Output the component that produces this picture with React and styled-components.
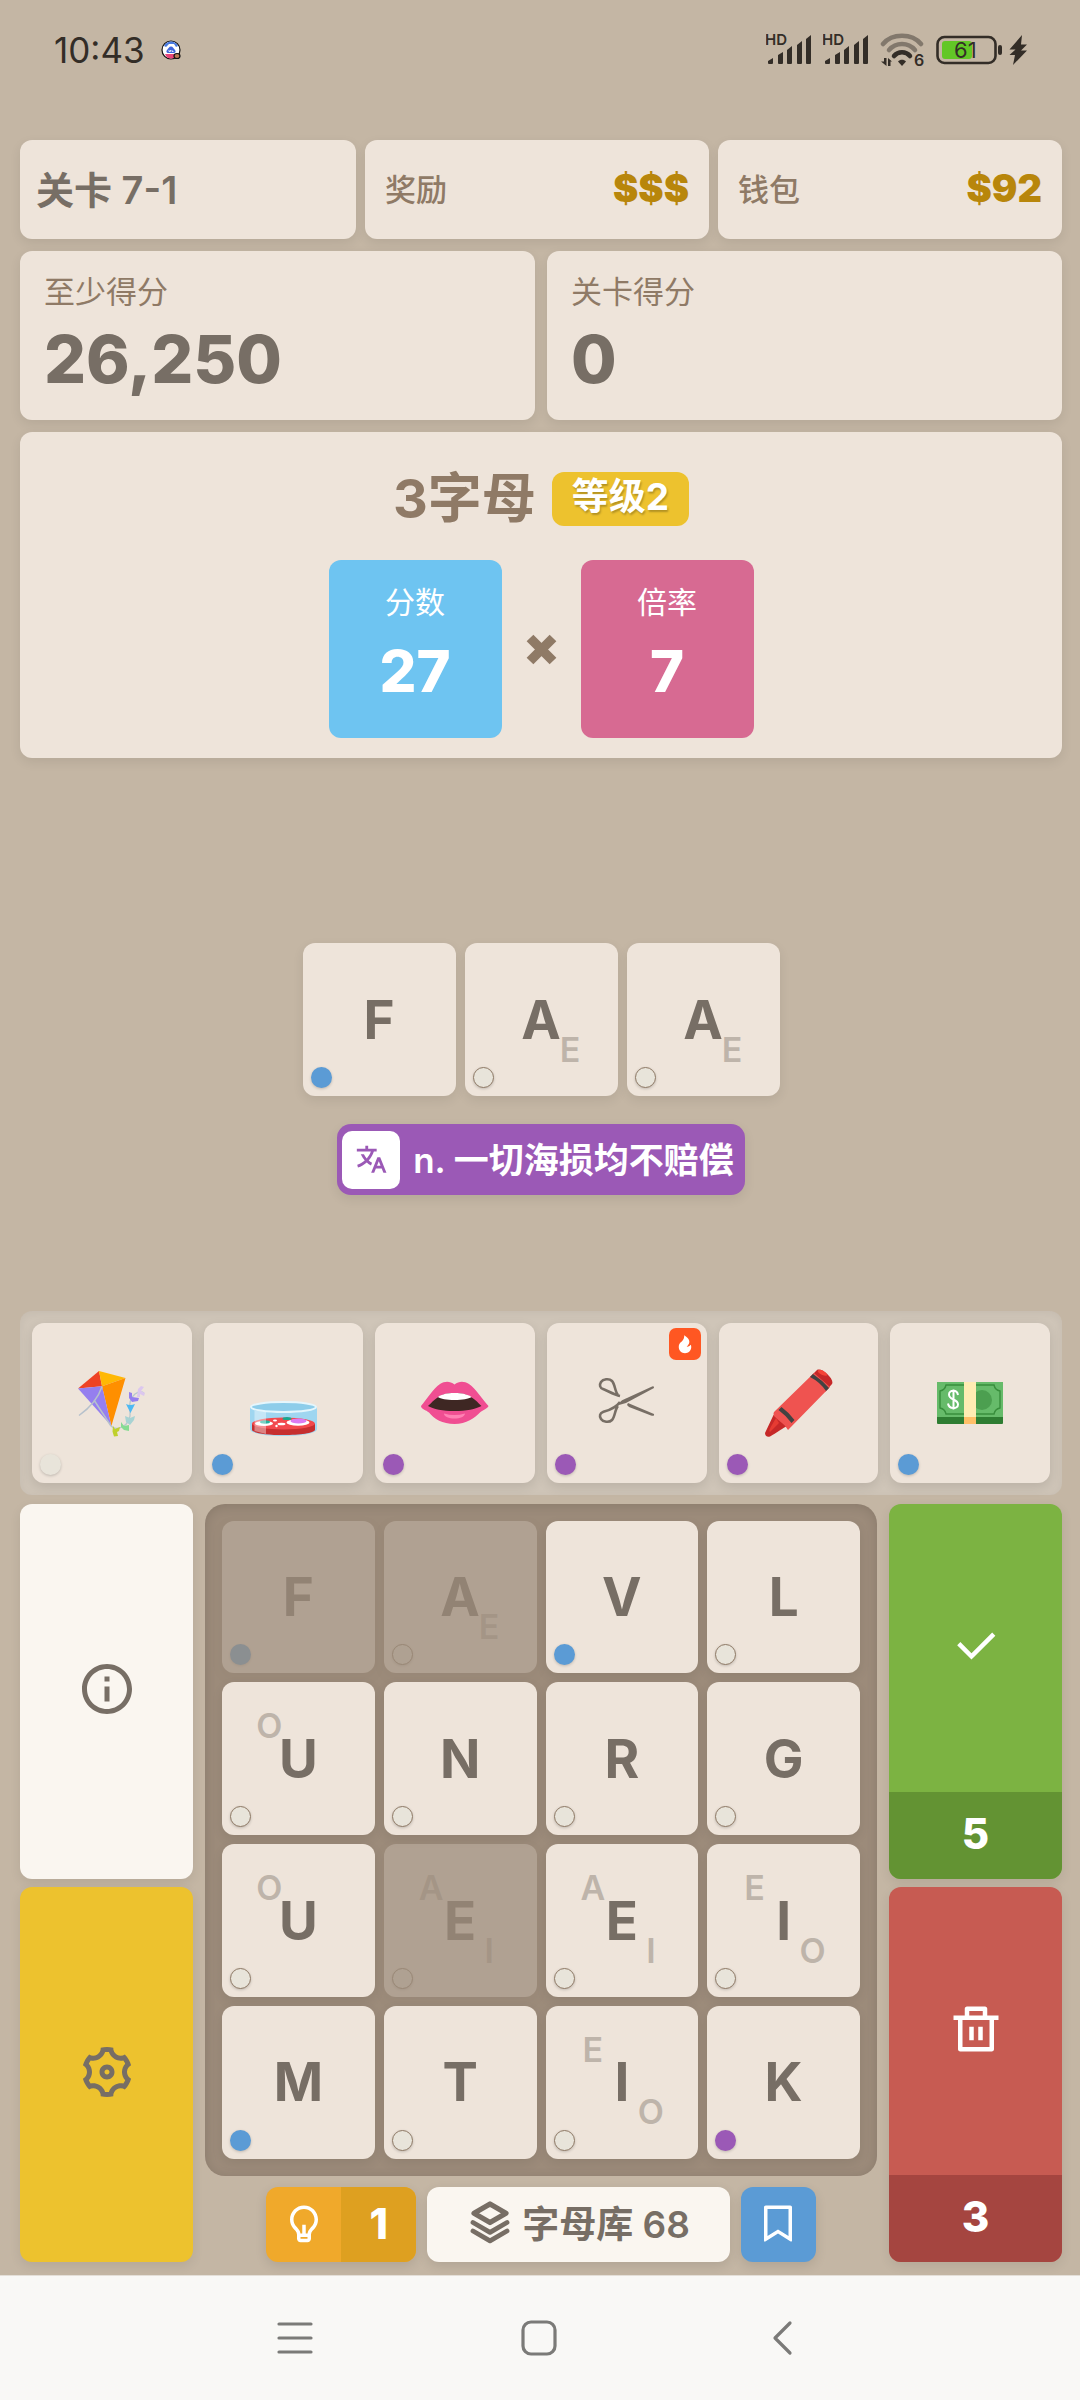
import React from 'react'

import styled, { createGlobalStyle } from 'styled-components'
import {
    RiInformationLine,
    RiSettings3Line,
    RiCheckLine,
    RiDeleteBinLine,
    RiLightbulbLine,
    RiBookmarkLine,
    RiTranslate2,
    RiFireFill
} from 'react-icons/ri'


const GlobalStyle = createGlobalStyle`
    * {
        box-sizing: border-box;
    }
    body {
        margin: 0;
        background-color: #c4b6a4;
        font-family: Inter, "Noto Sans CJK SC", sans-serif;
        color: #776e65;
    }
    button {
        border: none;
        padding: 0;
        margin: 0;
        font-family: inherit;
        color: inherit;
        cursor: pointer;
    }
    svg {
        display: block;
    }
`

const Screen = styled.div`
    display: flex;
    flex-direction: column;
    min-height: 100vh;
`

const StatusBar = styled.header`
    display: flex;
    align-items: center;
    justify-content: space-between;
    height: 100px;
    padding: 0 52px 0 54px;
    color: #332d27;
`

const StatusGroup = styled.div`
    display: flex;
    align-items: center;
    gap: ${props => props.$gap}px;
`

const Clock = styled.span`
    font-size: 35px;
`

const Game = styled.main`
    display: flex;
    flex-direction: column;
    padding: 40px 18px 13px 20px;
`

const InfoRows = styled.section`
    display: flex;
    flex-direction: column;
    gap: 12px;
`

const Row = styled.div`
    display: flex;
    gap: ${props => props.$gap}px;
`

const Panel = styled.div`
    flex: 1;
    background-color: #eee4da;
    border-radius: 12px;
    box-shadow: 0 4px 12px rgba(0, 0, 0, 0.08);
`

const LevelPanel = styled(Panel)`
    display: flex;
    align-items: center;
    height: 99px;
    padding: 0 16px 4px;
    font-size: 38px;
    font-weight: 600;
`

const MoneyPanel = styled(Panel)`
    display: flex;
    align-items: center;
    justify-content: space-between;
    height: 99px;
    padding: 0 20px 4px;
    color: #8f7a66;
    font-size: 31px;
    font-weight: 500;
`

const Money = styled.strong`
    color: #b8860b;
    font-size: 38px;
    font-weight: 900;
`

const ScorePanel = styled(Panel)`
    display: flex;
    flex-direction: column;
    padding: 19px 24px 16px;
`

const ScoreLabel = styled.span`
    color: #8f7a66;
    font-size: 31px;
    line-height: 44px;
`

const ScoreValue = styled.strong`
    font-size: 66px;
    font-weight: 800;
    line-height: 90px;
`

const HandPanel = styled(Panel)`
    display: flex;
    flex-direction: column;
    align-items: center;
    gap: 33px;
    padding: 39px 0 20px;
`

const HandTitle = styled.h1`
    display: flex;
    align-items: center;
    gap: 16px;
    margin: 0;
    color: #8f7a66;
    font-size: 54px;
    font-weight: 700;
    line-height: 56px;
`

const LevelBadge = styled.span`
    padding: 0 20px 4px;
    border-radius: 12px;
    background-color: #edc22e;
    color: #fff;
    font-size: 37px;
    line-height: 50px;
    text-shadow: 1px 2px 2px rgba(0, 0, 0, 0.25);
`

const Multiply = styled.div`
    display: flex;
    align-items: center;
    gap: 24px;
    color: #8f7a66;
`

const ValueBox = styled.div`
    display: flex;
    flex-direction: column;
    align-items: center;
    gap: 12px;
    width: 173px;
    padding: 20px 0 32px;
    border-radius: 12px;
    background-color: ${props => props.$color};
    color: #fff;
    font-size: 30px;
    line-height: 44px;

    strong {
        font-size: 58px;
        font-weight: 800;
        line-height: 70px;
    }
`

const WordArea = styled.section`
    display: flex;
    flex-direction: column;
    align-items: center;
    gap: 28px;
    margin: 185px 0 116px;
`

const Word = styled.div`
    display: grid;
    grid-template-columns: repeat(3, 153px);
    gap: 9px;
`

const TileButton = styled.button`
    position: relative;
    aspect-ratio: 1;
    border-radius: 12px;
    background-color: #eee4da;
    box-shadow: 0 4px 12px rgba(0, 0, 0, 0.08);
    font-size: 53px;
    font-weight: 700;
    opacity: ${props => props.$used ? 0.25 : 1};
`

const AltLetter = styled.span`
    position: absolute;
    left: ${props => props.$low ? 69 : 31}%;
    top: ${props => props.$low ? 69 : 28}%;
    transform: translate(-50%, -50%);
    font-size: 34px;
    font-weight: 600;
    opacity: 0.4;
`

const Dot = styled.i`
    position: absolute;
    left: 8px;
    bottom: 8px;
    width: 21px;
    height: 21px;
    border-radius: 50%;
    background-color: ${props => props.$color};
    border: ${props => props.$outlined ? '1px solid #8f7a66' : 'none'};
    box-shadow: 0 1px 3px rgba(0, 0, 0, 0.2);
`

const Meaning = styled.div`
    display: flex;
    align-items: center;
    gap: 13px;
    height: 71px;
    padding: 0 11px 0 5px;
    border-radius: 14px;
    background-color: #9b59b6;
    box-shadow: 0 4px 12px rgba(0, 0, 0, 0.08);
    color: #fff;
    font-size: 35px;
    font-weight: 600;
`

const MeaningText = styled.span`
    padding-bottom: 4px;
`

const TranslateButton = styled.button`
    display: grid;
    place-items: center;
    width: 58px;
    height: 58px;
    border-radius: 10px;
    background-color: #fff;
    color: #9b59b6;
    font-size: 34px;
`

const Tools = styled.section`
    display: grid;
    grid-template-columns: repeat(6, 1fr);
    gap: 12px;
    padding: 12px;
    margin-bottom: 9px;
    border-radius: 12px;
    background-color: #cfc5b8;
    box-shadow: inset 0 2px 10px rgba(0, 0, 0, 0.05);
`

const ToolButton = styled.button`
    position: relative;
    display: grid;
    place-items: center;
    aspect-ratio: 1;
    border-radius: 12px;
    background-color: #eee4da;
    box-shadow: 0 4px 12px rgba(0, 0, 0, 0.1);
`

const FireBadge = styled.span`
    position: absolute;
    top: 5px;
    right: 6px;
    display: grid;
    place-items: center;
    width: 32px;
    height: 32px;
    border-radius: 7px;
    background-color: #ff5722;
    color: #fff;
    font-size: 20px;
`

const PlayArea = styled.section`
    display: grid;
    grid-template-columns: 173px 1fr 173px;
    gap: 12px;
`

const SideColumn = styled.div`
    display: flex;
    flex-direction: column;
    gap: 8px;
`

const SideButton = styled.button`
    display: flex;
    flex: 1;
    flex-direction: column;
    overflow: hidden;
    border-radius: 12px;
    background-color: ${props => props.$bg};
    color: ${props => props.$color || '#776e65'};
    box-shadow: 0 4px 12px rgba(0, 0, 0, 0.08);
`

const SideIcon = styled.span`
    display: grid;
    flex: 1;
    place-items: center;
    width: 100%;
    padding-bottom: 4px;
    font-size: ${props => props.$size}px;
`

const SideCount = styled.strong`
    width: 100%;
    padding-bottom: 4px;
    background-color: ${props => props.$bg};
    font-size: 42px;
    font-weight: 800;
    line-height: 83px;
`

const Center = styled.div`
    display: flex;
    flex-direction: column;
    gap: 11px;
`

const Board = styled.div`
    display: grid;
    grid-template-columns: repeat(4, 1fr);
    gap: 9px;
    padding: 17px;
    border-radius: 20px;
    background-color: #9c8b7a;
    box-shadow: inset 0 2px 12px rgba(0, 0, 0, 0.12);
`

const Actions = styled.div`
    display: flex;
    justify-content: center;
    gap: 11px;
`

const ActionButton = styled.button`
    display: flex;
    align-items: center;
    justify-content: center;
    height: 75px;
    overflow: hidden;
    border-radius: 12px;
    background-color: ${props => props.$bg};
    color: ${props => props.$color || '#fff'};
    box-shadow: 0 4px 12px rgba(0, 0, 0, 0.1);
    font-size: 42px;
`

const ActionCell = styled.span`
    display: grid;
    place-items: center;
    width: 75px;
    height: 100%;
    padding-bottom: 2px;
    background-color: ${props => props.$bg || 'transparent'};
    font-weight: 800;
`

const LibraryButton = styled(ActionButton)`
    gap: 12px;
    padding: 0 40px 4px 43px;
    font-size: 37px;
    font-weight: 600;
`

const NavBar = styled.nav`
    display: flex;
    flex: 1;
    align-items: center;
    justify-content: center;
    min-height: 124px;
    padding-right: 2px;
    border-top: 1px solid #e4dfd8;
    background-color: #f9f8f6;
`

const NavButton = styled.button`
    display: grid;
    place-items: center;
    width: 244px;
    height: 100%;
    background: none;
`


const white = '#e8e4da'
const blue = '#5b9bd5'
const purple = '#9b59b6'

const word = [
    { letter: 'F', dot: blue },
    { letter: 'A', low: 'E' },
    { letter: 'A', low: 'E' }
]

const board = [
    { letter: 'F', dot: blue, used: true },
    { letter: 'A', low: 'E', used: true },
    { letter: 'V', dot: blue },
    { letter: 'L' },
    { letter: 'U', high: 'O' },
    { letter: 'N' },
    { letter: 'R' },
    { letter: 'G' },
    { letter: 'U', high: 'O' },
    { letter: 'E', high: 'A', low: 'I', used: true },
    { letter: 'E', high: 'A', low: 'I' },
    { letter: 'I', high: 'E', low: 'O' },
    { letter: 'M', dot: blue },
    { letter: 'T' },
    { letter: 'I', high: 'E', low: 'O' },
    { letter: 'K', dot: purple }
]


const Tile = ({ letter, high, low, dot, used }) => (
    <TileButton type="button" $used={used}>
        {letter}
        {high && <AltLetter>{high}</AltLetter>}
        {low && <AltLetter $low>{low}</AltLetter>}
        <Dot $color={dot || white} $outlined={!dot} />
    </TileButton>
)

const AppBadge = () => (
    <svg width="20" height="20" viewBox="0 0 20 20">
        <circle cx="10" cy="10" r="9" fill="#fff" stroke="#111" strokeWidth="1.2" />
        <path d="M4 14h12c-1 3-3 4.500-6 4.500S5 17 4 14z" fill="#e8457a" />
        <path d="M3 6c1.500-3 4-4.500 7-4.500S15.500 3 17 6l-2 1-2-3H8L5 7z" fill="#4a7be0" />
        <path d="M10 6.500c2 0 2.500 2 4 3.500 1.200 1.300.5 3-1 3H7c-1.500 0-2.200-1.700-1-3C7.500 8.500 8 6.500 10 6.500z" fill="#3f66dd" />
        <path d="M8 10v1.500h1.500V10M11 10v1.500h1.500" fill="none" stroke="#fff" strokeWidth="0.8" />
        <ellipse cx="16" cy="16" rx="3" ry="2.500" fill="#b87a55" stroke="#111" strokeWidth="1.200" />
    </svg>
)

const Signal = () => (
    <svg width="47" height="40" viewBox="0 -4 47 40" fill="currentColor">
        <text x="-1" y="11" fontSize="15" fontWeight="600" fontFamily="Inter, sans-serif">HD</text>
        <path d="M2 30v-3l5-3v5q0 1-1 1H3q-1 0-1-1zM12 30V21l5-3v11q0 1-1 1h-3q-1 0-1-1zM21 30V16l5-4v17q0 1-1 1h-3q-1 0-1-1zM31 30V11l5-4v22q0 1-1 1h-3q-1 0-1-1zM40 30V5l5-4v28q0 1-1 1h-3q-1 0-1-1z" />
    </svg>
)

const Wifi = () => (
    <svg width="46" height="42" viewBox="0 -4 46 42" fill="none" stroke="currentColor">
        <g strokeWidth="4.500" strokeLinecap="round">
            <path d="M3 11C12 0 32 0 41 11" opacity="0.45" />
            <path d="M9 17c7-8 19-8 26 0" opacity="0.45" />
            <path d="M14 23c4-5 12-5 16 0" />
        </g>
        <g fill="currentColor" stroke="none">
            <path d="M18 28.500c2-2.500 6-2.500 8 0L22 33z" />
            <path d="M4 25h2.500v8L1 28.500h3zM8 33V25l4 3.500h-1.500V33z" />
            <text x="34" y="33" fontSize="16" fontWeight="600" fontFamily="Inter, sans-serif">6</text>
        </g>
    </svg>
)

const Battery = () => (
    <svg width="92" height="32" viewBox="0 0 92 32">
        <rect x="1.500" y="3" width="58" height="26" rx="7" fill="none" stroke="currentColor" strokeWidth="2.600" />
        <rect x="6" y="7" width="30" height="18" rx="3" fill="#62c726" />
        <rect x="62" y="11" width="4" height="10" rx="2" fill="currentColor" />
        <text x="18" y="24" fontSize="22" fontFamily="Inter, sans-serif" fill="currentColor">61</text>
        <path d="M86 1 73.500 15.500h6l-6 5.500h5.500l-2 10L91 16.500h-6l6-6h-6z" fill="currentColor" />
    </svg>
)

const Times = () => (
    <svg width="31" height="31" viewBox="0 0 31 31">
        <path d="M4 4 27 27M27 4 4 27" stroke="currentColor" strokeWidth="9.500" />
    </svg>
)

const Stack = () => (
    <svg width="40" height="43" viewBox="0 0 40 43" fill="none" stroke="currentColor" strokeWidth="5.200" strokeLinecap="round" strokeLinejoin="round">
        <path d="M20 3 36 12.300 20 21.500 4 12.300z" />
        <path d="M3 21.500 20 31.300l17-9.800M3 30l17 9.800L37 30" strokeWidth="4.800" />
    </svg>
)

const Kite = () => (
    <svg width="68" height="68" viewBox="0 0 68 68">
        <path d="M33 57c3 3 7 3 11 1 6-3 9-8 8-16-1-7 0-13 5-17 3-2 6-3 9-1" fill="none" stroke="#b6c8cd" strokeWidth="1.300" />
        <path d="M21 2 0 19.500 24 17.300z" fill="#ee4325" />
        <path d="M21 2 47.500 9 24 17.300z" fill="#ffb804" />
        <path d="M24 17.300 47.500 9 33.400 57z" fill="#ff8f00" />
        <path d="M0 19.500 24 17.300 33.400 57z" fill="#957fef" />
        <path d="M24 17.500C20 30 13 38 1 46.500M16 31l17 26" fill="none" stroke="#b6c1cc" strokeWidth="1.500" />
        <path d="m35 57 2 3 5-2-1 4-2 1 1 4-4 .5-1.500-5z" fill="#bfd02c" />
        <path d="m43 53 3 4 5-1v6l-5-1-3-3z" fill="#86dc91" />
        <path d="m47 47 5 2 5-2-1 4-4 5-4-3z" fill="#a8d3d3" />
        <path d="M48 35q4 2 9 0l-4.500 9z" fill="#4fb9f3" />
        <path d="m51 23 3 1v4l7 1-1 3-6 1-3-4z" fill="#957fef" />
        <path d="m60 20 3-3 3 1-3 4 4 2-1 3-4-2v3h-3z" fill="#dcc7ee" />
    </svg>
)

const PetriDish = () => (
    <svg width="68" height="68" viewBox="0 0 68 68">
        <path d="M0 38h67v22c0 4-15 7-33.500 7S0 64 0 60z" fill="#9fd6f0" />
        <path d="M2 55v6c1 3 15 5 31.500 5S64 64 65 61v-6z" fill="#c62f2f" />
        <ellipse cx="33.500" cy="54.500" rx="31.500" ry="6" fill="#f2494d" />
        <ellipse cx="14" cy="54.500" rx="9" ry="2.600" fill="#fff" />
        <ellipse cx="15" cy="53" rx="5" ry="1.700" fill="#26b39d" />
        <ellipse cx="48" cy="53.500" rx="11.500" ry="3.200" fill="#fff" />
        <ellipse cx="48.500" cy="52" rx="8" ry="2.600" fill="#dc7bf2" />
        <ellipse cx="37" cy="49.500" rx="4.500" ry="1.600" fill="#15a88f" />
        <ellipse cx="31.500" cy="55" rx="4" ry="1.300" fill="#fff" />
        <ellipse cx="25" cy="51.500" rx="2" ry="1" fill="#fff" />
        <circle cx="26.500" cy="57" r="1.200" fill="#fff" />
        <path d="M4.500 41.500 16 43v22L4.500 62z" fill="#fff" opacity="0.4" />
        <ellipse cx="33.500" cy="38" rx="32.500" ry="5" fill="#8dcdea" stroke="#e5f6fc" strokeWidth="2" />
    </svg>
)

const Lips = () => (
    <svg width="68" height="68" viewBox="0 0 68 68">
        <path d="M0 37C6 30 12 20 19 15c5-3 10-3 14.500.5C38 12 43 12 48 15c7 5 13 15 19.500 22-.5 2-5 4-8 6-6 6-14 12-26 12S13 50 8 43.500C5 41 0 40 0 37z" fill="#f04e92" />
        <path d="M7 37c6-5 10-13 26.500-13S55 32 60.500 37C55 40 45 42 33.500 42S12 40 7 37z" fill="#3e2723" />
        <path d="M17 28c3-2.500 9-4 16.500-4S47 25.500 50.500 28c-3 2-9 3-17 3s-14-1-16.500-3z" fill="#fff" />
        <path d="M23 44.500q10.500 3 21 0c0 3-5 5-10.500 5S23 48 23 44.500z" fill="#ff82b4" />
    </svg>
)

const Scissors = () => (
    <svg width="68" height="68" viewBox="0 0 68 68">
        <g fill="none" stroke="#776e65" strokeWidth="2.600">
            <path d="M25 26C22 23 22 15 19 12c-3-3-9-2-11 1s-1 6 2 7 12 6 17 7" />
            <path d="M25 37c-3 3-3 11-6 14s-9 2-11-1-1-6 2-7 12-3 17-10" />
        </g>
        <path d="M26 36c1-4 3-5 8-7l24-11c2-1 3-1 3 1L33 34z" fill="#776e65" />
        <path d="m35 34 26 11c.5 2-1 2-3 1.500L36 38l-2-2z" fill="#776e65" />
    </svg>
)

const Crayon = () => (
    <svg width="68" height="68" viewBox="0 0 68 68">
        <path d="M52 1c4-3 18 9 15 14l-7 8L45 8z" fill="#c62828" />
        <path d="M54 1c3-1 8 3 8 5s-6 0-8-2-1-3 0-3z" fill="#f44336" />
        <path d="m8.500 46 6-4 11 13-7 4C15 61 8 66 5 67.500c-3 1-5-1-5-3.500z" fill="#c62828" />
        <path d="M7.500 55 11 49l3 5-9 9q-2-1 2.500-8z" fill="#f44336" opacity="0.7" />
        <path d="M49 4 65 18 23 61q-2-4-6-7t-8-7q-1-3 0-4z" fill="#ef5350" />
        <path d="m45 8 3-3q9 6 16 14l-3 3Q55 13 45 8zM13.500 41l3-3q8 6 13 13l-3 3q-5-7-13-13z" fill="#424242" />
    </svg>
)

const Cash = () => (
    <svg width="68" height="68" viewBox="0 0 68 68">
        <rect x="1" y="13" width="66" height="42" rx="1" fill="#2e7d32" />
        <path d="M1 13h66v35H1z" fill="#66bb6a" />
        <path d="M10 16h48q1 5 6 6v17q-5 1-6 6H10q-1-5-6-6V22q5-1 6-6z" fill="none" stroke="#388e3c" strokeWidth="1.400" />
        <circle cx="46" cy="31" r="10" fill="#4c9f50" />
        <path d="M28 13h12v35H28z" fill="#ffecb3" />
        <path d="M28 48h12v7H28z" fill="#ffc069" />
        <path d="M22 26c-1-6-9-5-9-.5 0 6 9 4 9 10 0 5-9 5-10-1M17.500 20.500v20" fill="none" stroke="#fff" strokeWidth="2" />
    </svg>
)

const tools = [
    { name: '风筝', icon: Kite, dot: white },
    { name: '培养皿', icon: PetriDish, dot: blue },
    { name: '嘴唇', icon: Lips, dot: purple },
    { name: '剪刀', icon: Scissors, dot: purple, fire: true },
    { name: '蜡笔', icon: Crayon, dot: purple },
    { name: '钞票', icon: Cash, dot: blue }
]


const App = () => {

    const renderTiles = tiles => tiles.map((tile, i) => <Tile key={i} {...tile} />)

    const renderTools = tools.map(({ name, icon: Icon, dot, fire }) => (
        <ToolButton key={name} type="button" aria-label={name}>
            <Icon />
            {fire && <FireBadge><RiFireFill /></FireBadge>}
            <Dot $color={dot} />
        </ToolButton>
    ))

    return (
        <Screen lang="zh-CN">
            <GlobalStyle />

            <StatusBar>
                <StatusGroup $gap={16}>
                    <Clock>10:43</Clock>
                    <AppBadge />
                </StatusGroup>
                <StatusGroup $gap={10}>
                    <Signal />
                    <Signal />
                    <Wifi />
                    <Battery />
                </StatusGroup>
            </StatusBar>

            <Game>
                <InfoRows>
                    <Row $gap={9}>
                        <LevelPanel>关卡 7-1</LevelPanel>
                        <MoneyPanel>奖励 <Money>$$$</Money></MoneyPanel>
                        <MoneyPanel>钱包 <Money>$92</Money></MoneyPanel>
                    </Row>
                    <Row $gap={12}>
                        <ScorePanel>
                            <ScoreLabel>至少得分</ScoreLabel>
                            <ScoreValue>26,250</ScoreValue>
                        </ScorePanel>
                        <ScorePanel>
                            <ScoreLabel>关卡得分</ScoreLabel>
                            <ScoreValue>0</ScoreValue>
                        </ScorePanel>
                    </Row>
                    <HandPanel>
                        <HandTitle>3字母 <LevelBadge>等级2</LevelBadge></HandTitle>
                        <Multiply>
                            <ValueBox $color="#6ec4f1">分数<strong>27</strong></ValueBox>
                            <Times />
                            <ValueBox $color="#d76a92">倍率<strong>7</strong></ValueBox>
                        </Multiply>
                    </HandPanel>
                </InfoRows>

                <WordArea>
                    <Word>{renderTiles(word)}</Word>
                    <Meaning>
                        <TranslateButton type="button" aria-label="翻译"><RiTranslate2 /></TranslateButton>
                        <MeaningText>n. 一切海损均不赔偿</MeaningText>
                    </Meaning>
                </WordArea>

                <Tools>{renderTools}</Tools>

                <PlayArea>
                    <SideColumn>
                        <SideButton type="button" aria-label="信息" $bg="#faf6f0">
                            <SideIcon $size={60}><RiInformationLine /></SideIcon>
                        </SideButton>
                        <SideButton type="button" aria-label="设置" $bg="#edc22e">
                            <SideIcon $size={60}><RiSettings3Line /></SideIcon>
                        </SideButton>
                    </SideColumn>

                    <Center>
                        <Board>{renderTiles(board)}</Board>
                        <Actions>
                            <ActionButton type="button" aria-label="提示 1" $bg="#f0a92b">
                                <ActionCell><RiLightbulbLine /></ActionCell>
                                <ActionCell $bg="#dea020">1</ActionCell>
                            </ActionButton>
                            <LibraryButton type="button" $bg="#faf6f0" $color="#776e65">
                                <Stack />字母库 68
                            </LibraryButton>
                            <ActionButton type="button" aria-label="书签" $bg={blue}>
                                <ActionCell><RiBookmarkLine /></ActionCell>
                            </ActionButton>
                        </Actions>
                    </Center>

                    <SideColumn>
                        <SideButton type="button" aria-label="提交 5" $bg="#7cb342" $color="#fff">
                            <SideIcon $size={54}><RiCheckLine /></SideIcon>
                            <SideCount $bg="#639333">5</SideCount>
                        </SideButton>
                        <SideButton type="button" aria-label="丢弃 3" $bg="#c75b52" $color="#fff">
                            <SideIcon $size={54}><RiDeleteBinLine /></SideIcon>
                            <SideCount $bg="#a54540">3</SideCount>
                        </SideButton>
                    </SideColumn>
                </PlayArea>
            </Game>

            <NavBar>
                <NavButton type="button" aria-label="菜单">
                    <svg width="36" height="36" viewBox="0 0 36 36" stroke="#7b7a78" strokeWidth="3.200" strokeLinecap="round">
                        <path d="M2 4h32M2 18h32M2 32h32" />
                    </svg>
                </NavButton>
                <NavButton type="button" aria-label="主页">
                    <svg width="36" height="36" viewBox="0 0 36 36" fill="none" stroke="#7b7a78" strokeWidth="3.200">
                        <rect x="2" y="2" width="32" height="32" rx="8" />
                    </svg>
                </NavButton>
                <NavButton type="button" aria-label="返回">
                    <svg width="36" height="36" viewBox="0 0 36 36" fill="none" stroke="#7b7a78" strokeWidth="3.200" strokeLinecap="round" strokeLinejoin="round">
                        <path d="M25 3 10 18l15 15" />
                    </svg>
                </NavButton>
            </NavBar>
        </Screen>
    )
}


export default App
